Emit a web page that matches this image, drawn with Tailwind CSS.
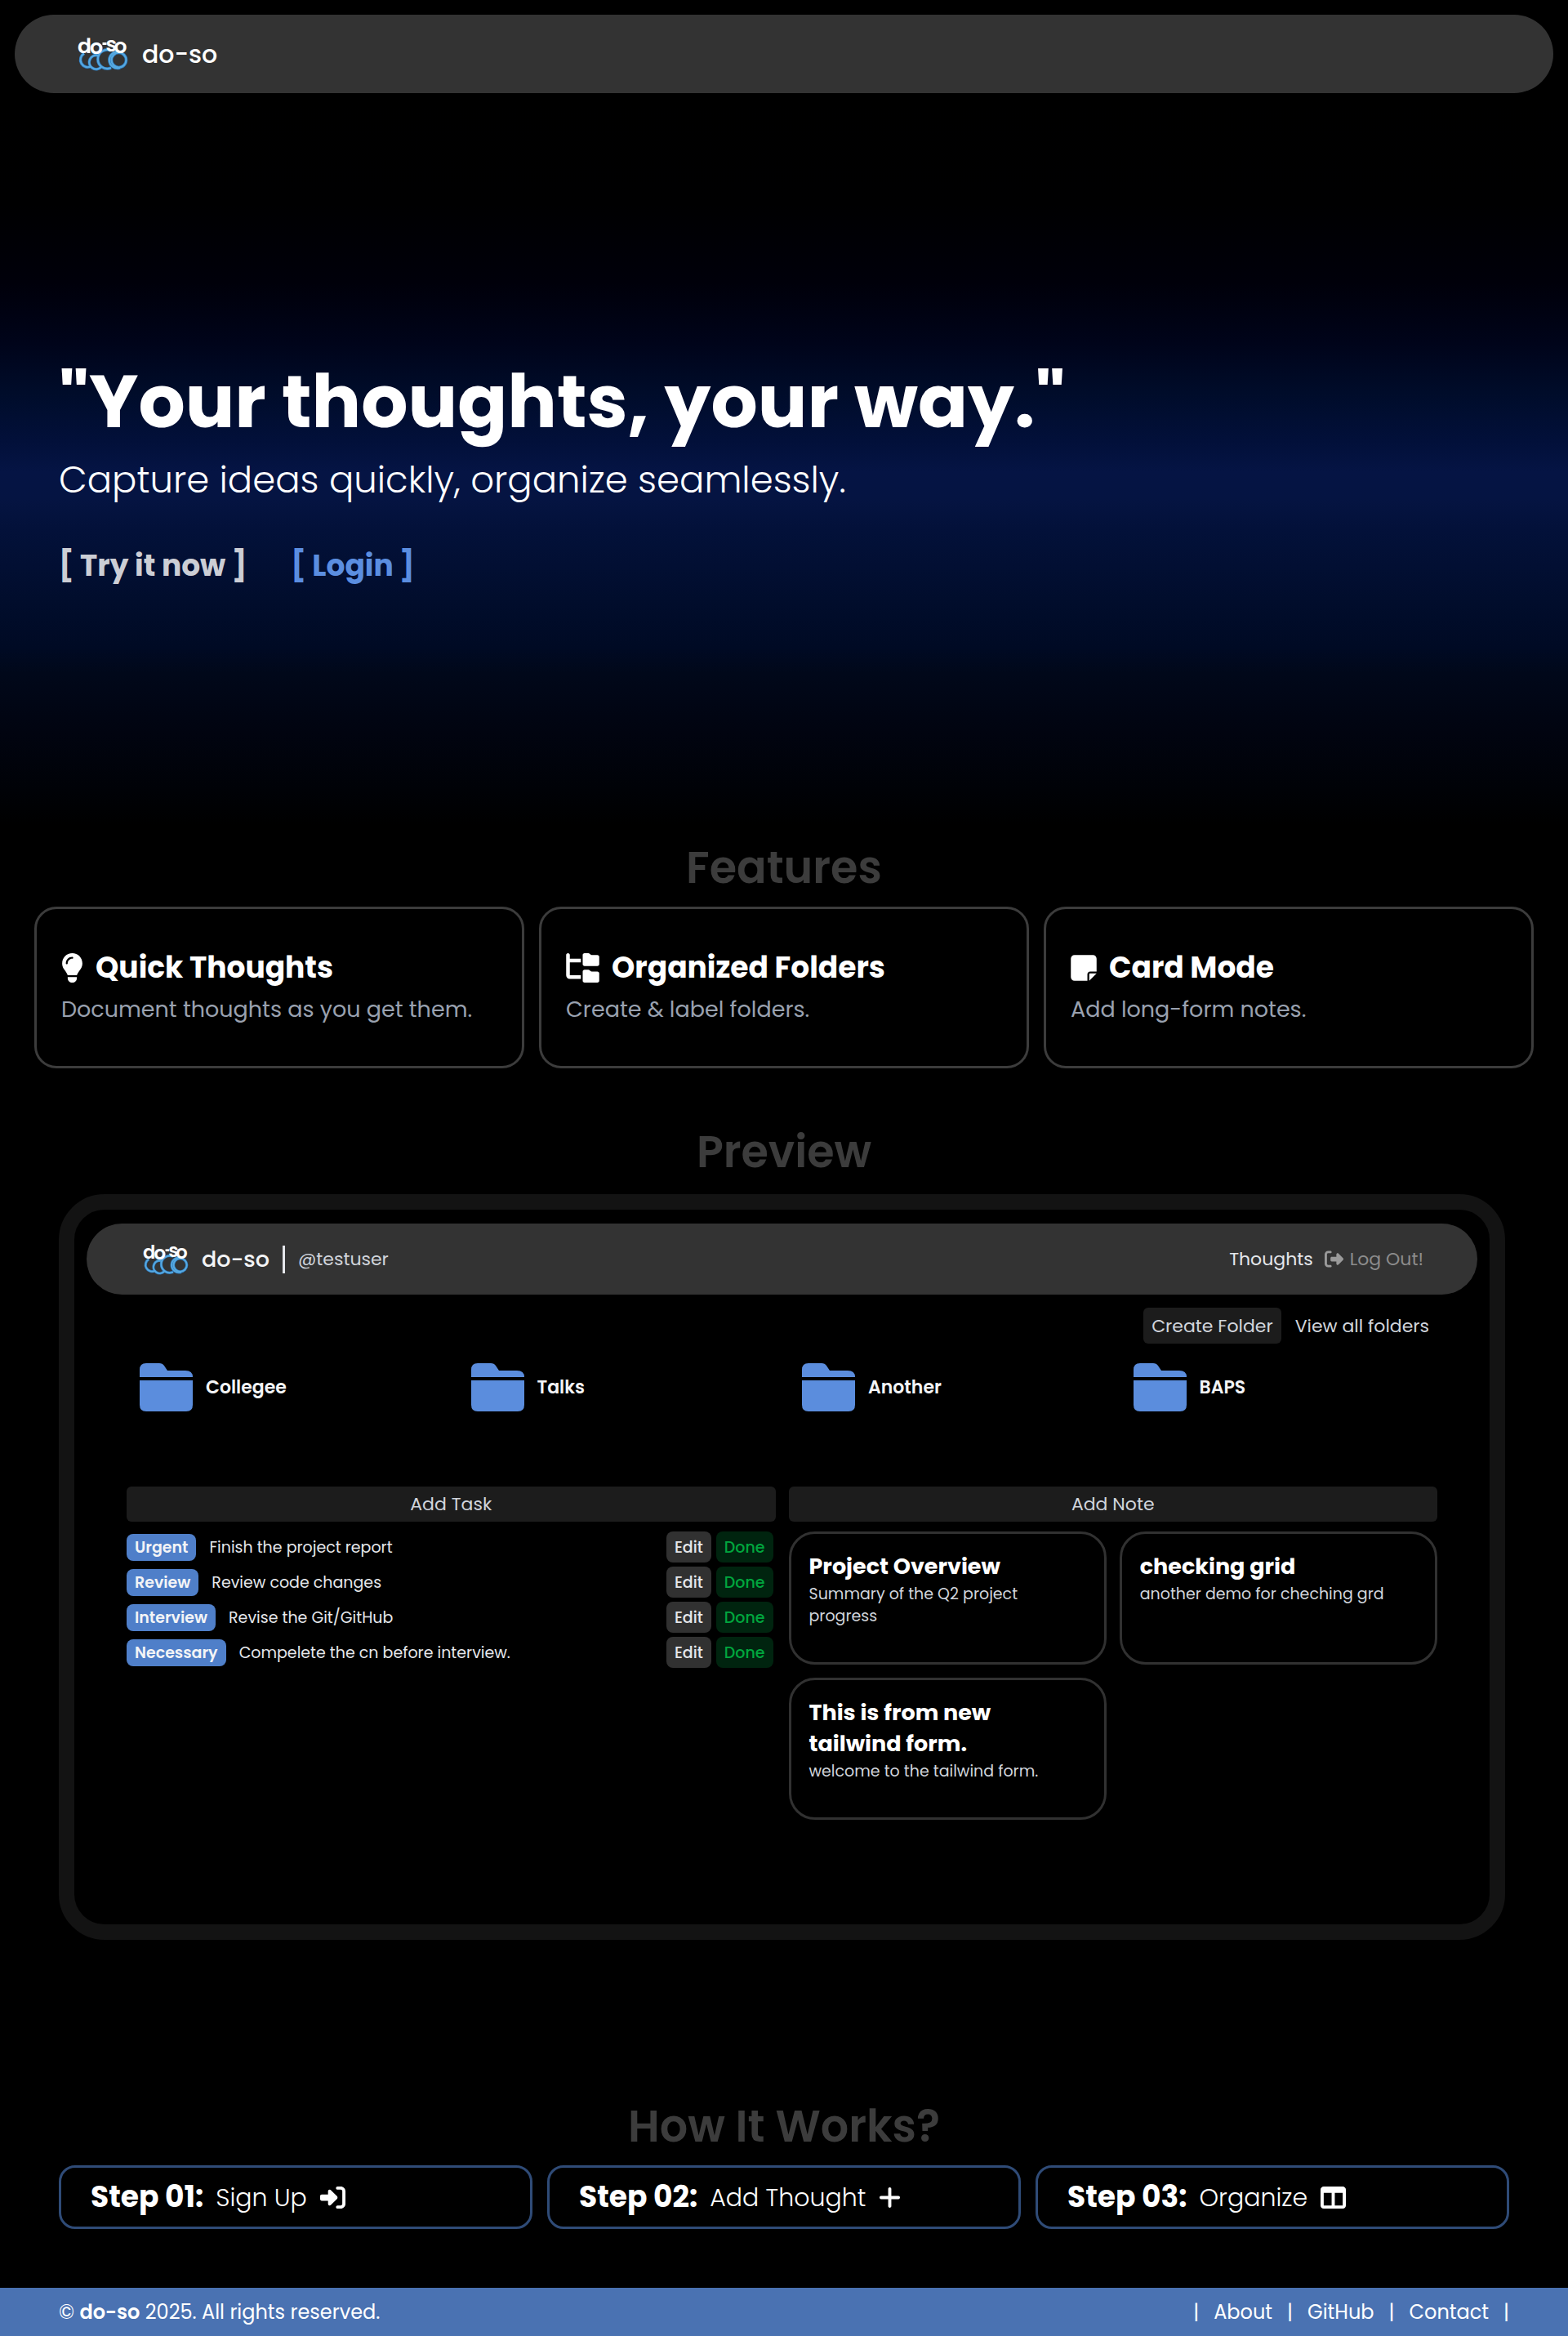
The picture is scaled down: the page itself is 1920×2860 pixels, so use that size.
<!DOCTYPE html>
<html lang="en">
<head>
<meta charset="utf-8">
<meta name="viewport" content="width=device-width, initial-scale=1">
<title>do-so</title>
<script src="https://cdn.jsdelivr.net/npm/@tailwindcss/browser@4"></script>
</head>
<body class="bg-black text-white font-[Poppins,Inter,sans-serif]">

<!-- Shared icons -->
<svg class="hidden" aria-hidden="true">
  <symbol id="logo" viewBox="0 0 62 42">
    <g fill="none" stroke="#2c78bd" stroke-width="3.600">
      <path d="M17 36A8.500 8.500 0 0 1 8 20.500"/>
      <path d="M29 37A8.500 8.500 0 1 1 25 23"/>
      <path d="M41 38A11.500 11.500 0 1 1 41 17"/>
      <path d="M52 38A10 10 0 1 1 52 19"/>
      <circle cx="50.500" cy="28.500" r="9"/>
      <circle cx="23" cy="14.500" r="6"/>
    </g>
    <g fill="none" stroke="#56a9e0" stroke-width="2.200">
      <path d="M17 36A8.500 8.500 0 0 1 8 20.500"/>
      <path d="M29 37A8.500 8.500 0 1 1 25 23"/>
      <path d="M41 38A11.500 11.500 0 1 1 41 17"/>
      <path d="M52 38A10 10 0 1 1 52 19"/>
      <circle cx="50.500" cy="28.500" r="9"/>
      <circle cx="23" cy="14.500" r="6"/>
    </g>
    <g fill="#fff" font-size="25" font-weight="600">
      <text x="0" y="20">d</text>
      <text x="15" y="21">o</text>
      <rect x="30.500" y="7" width="5" height="3"/>
      <text x="34.500" y="18">s</text>
      <text x="44.500" y="20">o</text>
    </g>
  </symbol>
  <symbol id="folder" viewBox="0 0 65 59"><path fill="currentColor" d="M0 17V8Q0 0 8 0H24Q28 0 30 3L34 9H56Q65 9 65 17ZM0 21H65V51Q65 59 57 59H8Q0 59 0 51Z"/></symbol>
</svg>

<header class="m-[18px] mb-0 flex h-24 items-center rounded-full bg-[#333] px-[77px]">
  <a href="#" class="flex items-center gap-[17px] text-[30px] leading-[45px] font-medium">
    <svg class="h-[42px] w-[62px]" aria-hidden="true"><use href="#logo"/></svg>
    do-so
  </a>
</header>

<main>
  <section class="bg-[linear-gradient(to_bottom,#000_0%,#000001_15%,#00000a_25.5%,#00041a_33.7%,#000c2a_40.4%,#02103a_47%,#051444_51%,#051442_54.6%,#03113a_58.6%,#010d2c_68.7%,#000a24_74.8%,#01081a_78.2%,#010410_86.2%,#000207_93.7%,#000_98.7%)] px-[72px] pt-[333px] pb-[302px]">
    <h1 class="text-[90px] leading-[90px] font-bold">"Your thoughts, your way."</h1>
    <p class="mt-[17px] text-[45px] leading-[68px] font-light">Capture ideas quickly, organize seamlessly.</p>
    <nav class="mt-11 flex gap-[54px] text-[36px] leading-[54px] font-bold">
      <a href="#" class="text-[#ccced5]">[ Try it now ]</a>
      <a href="#" class="text-[#5b8ee0]">[ Login ]</a>
    </nav>
  </section>

  <section class="px-[42px]">
    <h2 class="text-center text-[54px] leading-[81px] font-semibold text-[#3c3c3c]">Features</h2>
    <div class="mt-[7px] grid grid-cols-3 gap-[18px]">
      <article class="rounded-[27px] border-3 border-[#3c3c3c] px-[30px] pt-[45px] pb-[49px]">
        <h3 class="flex items-center gap-[15px] text-[36px] leading-[54px] font-bold">
          <svg class="h-9 w-[27px]" viewBox="0 0 384 512" fill="currentColor" aria-hidden="true"><path d="M272 384c9.600-31.900 29.500-59.100 49.200-86.200c5.200-7.100 10.400-14.200 15.400-21.400c19.800-28.500 31.400-63 31.400-100.300C368 78.800 289.200 0 192 0S16 78.800 16 176c0 37.300 11.600 71.900 31.400 100.300c5 7.200 10.200 14.300 15.400 21.400c19.800 27.100 39.700 54.400 49.200 86.200H272zM192 512c44.200 0 80-35.800 80-80V416H112v16c0 44.200 35.800 80 80 80zM112 176c0 8.800-7.200 16-16 16s-16-7.200-16-16c0-61.900 50.100-112 112-112c8.800 0 16 7.200 16 16s-7.200 16-16 16c-44.200 0-80 35.800-80 80z"/></svg>
          Quick Thoughts
        </h3>
        <p class="mt-1 text-[27px] leading-10 text-gray-400">Document thoughts as you get them.</p>
      </article>
      <article class="rounded-[27px] border-3 border-[#3c3c3c] px-[30px] pt-[45px] pb-[49px]">
        <h3 class="flex items-center gap-[15px] text-[36px] leading-[54px] font-bold">
          <svg class="h-9 w-[41px]" viewBox="0 0 576 512" fill="currentColor" aria-hidden="true"><path d="M64 32C64 14.300 49.700 0 32 0S0 14.300 0 32v96V384c0 35.300 28.700 64 64 64H256V384H64V160H256V96H64V32zM288 192c0 17.700 14.300 32 32 32H544c17.700 0 32-14.300 32-32V64c0-17.700-14.300-32-32-32H445.300c-8.500 0-16.600-3.400-22.600-9.400L409.400 9.400c-6-6-14.100-9.400-22.600-9.400H320c-17.700 0-32 14.300-32 32V192zm0 288c0 17.700 14.300 32 32 32H544c17.700 0 32-14.300 32-32V352c0-17.700-14.300-32-32-32H445.300c-8.500 0-16.600-3.400-22.600-9.400l-13.300-13.300c-6-6-14.100-9.400-22.600-9.400H320c-17.700 0-32 14.300-32 32V480z"/></svg>
          Organized Folders
        </h3>
        <p class="mt-1 text-[27px] leading-10 text-gray-400">Create &amp; label folders.</p>
      </article>
      <article class="rounded-[27px] border-3 border-[#3c3c3c] px-[30px] pt-[45px] pb-[49px]">
        <h3 class="flex items-center gap-[15px] text-[36px] leading-[54px] font-bold">
          <svg class="h-9 w-8" viewBox="0 0 448 512" fill="currentColor" aria-hidden="true"><path d="M64 32C28.700 32 0 60.700 0 96V416c0 35.300 28.700 64 64 64H288V368c0-26.500 21.500-48 48-48H448V96c0-35.300-28.700-64-64-64H64zM448 352H402.700 336c-8.800 0-16 7.200-16 16v66.700V480l32-32 64-64 32-32z"/></svg>
          Card Mode
        </h3>
        <p class="mt-1 text-[27px] leading-10 text-gray-400">Add long-form notes.</p>
      </article>
    </div>
  </section>

  <section class="mt-[62px] px-[72px]">
    <h2 class="text-center text-[54px] leading-[81px] font-semibold text-[#3c3c3c]">Preview</h2>

    <!-- App preview -->
    <div class="mt-[11px] mr-[5px] rounded-[56px] border-[19px] border-[#131313] pt-[17px] pb-32 text-[22px] leading-[33px]">
      <div class="mx-[15px] flex h-[87px] items-center justify-between rounded-full bg-[#333] pr-[66px] pl-[69px]">
        <div class="flex items-center">
          <svg class="h-[38px] w-14" aria-hidden="true"><use href="#logo"/></svg>
          <span class="ml-4 text-[27px] leading-10 font-medium text-gray-100">do-so</span>
          <span class="ml-4 h-[34px] w-[3px] bg-gray-200"></span>
          <span class="ml-4 text-gray-300">@testuser</span>
        </div>
        <nav class="flex items-center gap-3.5">
          <a href="#" class="text-gray-200">Thoughts</a>
          <a href="#" class="flex items-center gap-2 text-[#8c8c8c]">
            <svg class="size-[23px]" viewBox="0 0 512 512" fill="#9a9a9a" aria-hidden="true"><path d="M377.900 105.900L500.700 228.700c7.200 7.200 11.300 17.100 11.300 27.300s-4.100 20.100-11.300 27.300L377.900 406.100c-6.400 6.400-15 9.900-24 9.900c-18.700 0-33.900-15.200-33.900-33.900l0-62.100-128 0c-17.700 0-32-14.300-32-32l0-64c0-17.700 14.300-32 32-32l128 0 0-62.100c0-18.700 15.200-33.900 33.900-33.900c9 0 17.600 3.600 24 9.900zM160 96L96 96c-17.700 0-32 14.300-32 32l0 256c0 17.700 14.300 32 32 32l64 0c17.700 0 32 14.300 32 32s-14.300 32-32 32l-64 0c-53 0-96-43-96-96L0 128C0 75 43 32 96 32l64 0c17.700 0 32 14.300 32 32s-14.300 32-32 32z"/></svg>
            Log Out!
          </a>
        </nav>
      </div>

      <div class="px-16">
        <div class="mt-4 flex justify-end gap-[7px] text-gray-300">
          <button type="button" class="h-11 rounded-md bg-[#1c1c1c] px-2.5">Create Folder</button>
          <button type="button" class="h-11 rounded-md px-2.5">View all folders</button>
        </div>

        <ul class="mt-6 grid grid-cols-4 gap-[17px] font-semibold text-gray-100">
          <li class="flex items-center gap-4 px-4"><svg class="h-[59px] w-[65px] text-[#5b8ddd]" aria-hidden="true"><use href="#folder"/></svg>Collegee</li>
          <li class="flex items-center gap-4 px-4"><svg class="h-[59px] w-[65px] text-[#5b8ddd]" aria-hidden="true"><use href="#folder"/></svg>Talks</li>
          <li class="flex items-center gap-4 px-4"><svg class="h-[59px] w-[65px] text-[#5b8ddd]" aria-hidden="true"><use href="#folder"/></svg>Another</li>
          <li class="flex items-center gap-4 px-4"><svg class="h-[59px] w-[65px] text-[#5b8ddd]" aria-hidden="true"><use href="#folder"/></svg>BAPS</li>
        </ul>

        <div class="mt-[92px] grid grid-cols-2 gap-4">
          <div>
            <button type="button" class="block h-[43px] w-full rounded-md bg-[#1c1c1c] text-gray-300">Add Task</button>
            <ul class="mt-3 flex flex-col gap-[5px] pr-[3px] text-[19px] leading-[33px] text-gray-200">
              <li class="flex h-[38px] items-center">
                <span class="mr-4 rounded-lg bg-[#4f7fc9] px-2.5 font-semibold text-gray-100">Urgent</span>Finish the project report
                <button type="button" class="ml-auto h-[38px] rounded-lg bg-[#313131] px-2.5 font-medium">Edit</button>
                <button type="button" class="ml-1.5 h-[38px] rounded-lg bg-[#00240f] px-2.5 font-medium text-[#00a63e]">Done</button>
              </li>
              <li class="flex h-[38px] items-center">
                <span class="mr-4 rounded-lg bg-[#4f7fc9] px-2.5 font-semibold text-gray-100">Review</span>Review code changes
                <button type="button" class="ml-auto h-[38px] rounded-lg bg-[#313131] px-2.5 font-medium">Edit</button>
                <button type="button" class="ml-1.5 h-[38px] rounded-lg bg-[#00240f] px-2.5 font-medium text-[#00a63e]">Done</button>
              </li>
              <li class="flex h-[38px] items-center">
                <span class="mr-4 rounded-lg bg-[#4f7fc9] px-2.5 font-semibold text-gray-100">Interview</span>Revise the Git/GitHub
                <button type="button" class="ml-auto h-[38px] rounded-lg bg-[#313131] px-2.5 font-medium">Edit</button>
                <button type="button" class="ml-1.5 h-[38px] rounded-lg bg-[#00240f] px-2.5 font-medium text-[#00a63e]">Done</button>
              </li>
              <li class="flex h-[38px] items-center">
                <span class="mr-4 rounded-lg bg-[#4f7fc9] px-2.5 font-semibold text-gray-100">Necessary</span>Compelete the cn before interview.
                <button type="button" class="ml-auto h-[38px] rounded-lg bg-[#313131] px-2.5 font-medium">Edit</button>
                <button type="button" class="ml-1.5 h-[38px] rounded-lg bg-[#00240f] px-2.5 font-medium text-[#00a63e]">Done</button>
              </li>
            </ul>
          </div>
          <div>
            <button type="button" class="block h-[43px] w-full rounded-md bg-[#1c1c1c] text-gray-300">Add Note</button>
            <div class="mt-3 grid grid-cols-2 gap-4">
              <article class="rounded-[32px] border-3 border-[#313131] px-[22px] pt-[21px] pb-[43px]">
                <h3 class="text-[27px] leading-[38px] font-bold">Project Overview</h3>
                <p class="mt-px text-[19px] leading-[27px] text-gray-300">Summary of the Q2 project progress</p>
              </article>
              <article class="rounded-[32px] border-3 border-[#313131] px-[22px] pt-[21px] pb-[43px]">
                <h3 class="text-[27px] leading-[38px] font-bold">checking grid</h3>
                <p class="mt-px text-[19px] leading-[27px] text-gray-300">another demo for cheching grd</p>
              </article>
              <article class="rounded-[32px] border-3 border-[#313131] px-[22px] pt-[21px] pb-[43px]">
                <h3 class="text-[27px] leading-[38px] font-bold">This is from new tailwind form.</h3>
                <p class="mt-px text-[19px] leading-[27px] text-gray-300">welcome to the tailwind form.</p>
              </article>
            </div>
          </div>
        </div>
      </div>
    </div>
  </section>

  <section class="mt-[188px] px-[72px]">
    <h2 class="text-center text-[54px] leading-[81px] font-semibold text-[#3c3c3c]">How It Works?</h2>
    <ol class="mt-[7px] mb-[72px] grid grid-cols-3 gap-[18px] text-[30px] leading-[45px] font-light">
      <li class="flex items-center rounded-[20px] border-3 border-[#2f4b77] px-9 py-[9px]">
        <strong class="text-[36px] leading-[54px] font-bold">Step 01:</strong><span class="mr-4 ml-[15px]">Sign Up</span>
        <svg class="size-[31px]" viewBox="0 0 512 512" fill="currentColor" aria-hidden="true"><path d="M217.900 105.900L340.700 228.700c7.200 7.200 11.300 17.100 11.300 27.300s-4.100 20.100-11.300 27.300L217.900 406.100c-6.400 6.400-15 9.900-24 9.900c-18.700 0-33.900-15.200-33.900-33.900l0-62.100L32 320c-17.700 0-32-14.300-32-32l0-64c0-17.700 14.300-32 32-32l128 0 0-62.100c0-18.700 15.200-33.900 33.900-33.900c9 0 17.600 3.600 24 9.900zM352 416l64 0c17.700 0 32-14.300 32-32l0-256c0-17.700-14.300-32-32-32l-64 0c-17.700 0-32-14.300-32-32s14.300-32 32-32l64 0c53 0 96 43 96 96l0 256c0 53-43 96-96 96l-64 0c-17.700 0-32-14.300-32-32s14.300-32 32-32z"/></svg>
      </li>
      <li class="flex items-center rounded-[20px] border-3 border-[#2f4b77] px-9 py-[9px]">
        <strong class="text-[36px] leading-[54px] font-bold">Step 02:</strong><span class="mr-4 ml-[15px]">Add Thought</span>
        <svg class="h-[31px] w-[27px]" viewBox="0 0 448 512" fill="currentColor" aria-hidden="true"><path d="M256 80c0-17.700-14.300-32-32-32s-32 14.300-32 32V224H48c-17.700 0-32 14.300-32 32s14.300 32 32 32H192V432c0 17.700 14.300 32 32 32s32-14.300 32-32V288H400c17.700 0 32-14.300 32-32s-14.300-32-32-32H256V80z"/></svg>
      </li>
      <li class="flex items-center rounded-[20px] border-3 border-[#2f4b77] px-9 py-[9px]">
        <strong class="text-[36px] leading-[54px] font-bold">Step 03:</strong><span class="mr-4 ml-[15px]">Organize</span>
        <svg class="size-[31px]" viewBox="0 0 512 512" fill="currentColor" aria-hidden="true"><path d="M0 96C0 60.700 28.700 32 64 32H448c35.300 0 64 28.700 64 64V416c0 35.300-28.700 64-64 64H64c-35.300 0-64-28.700-64-64V96zm64 64V416H224V160H64zm384 0H288V416H448V160z"/></svg>
      </li>
    </ol>
  </section>
</main>

<footer class="flex justify-between bg-[#4a72b2] px-[72px] pt-3 pb-[11px] text-[24px] leading-9">
  <p>© <strong class="font-semibold">do-so</strong> 2025. All rights reserved.</p>
  <nav class="flex gap-[18px]">
    <span>|</span><a href="#">About</a><span>|</span><a href="#">GitHub</a><span>|</span><a href="#">Contact</a><span>|</span>
  </nav>
</footer>
</body>
</html>
